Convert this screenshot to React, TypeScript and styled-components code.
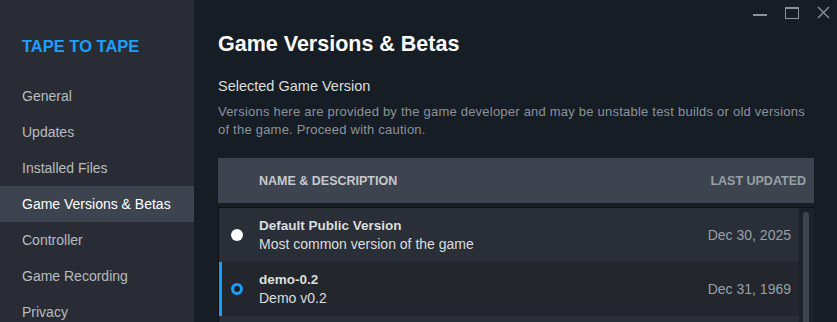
import React from "react";
import styled, { createGlobalStyle } from "styled-components";

const GlobalStyle = createGlobalStyle`
  html, body {
    margin: 0;
    padding: 0;
    background: #171d25;
    font-family: "Liberation Sans", Arial, sans-serif;
  }
  * {
    box-sizing: border-box;
  }
`;

type Version = {
  name: string;
  description: string;
  updated: string;
  selected?: boolean;
};

const versions: Version[] = [
  {
    name: "Default Public Version",
    description: "Most common version of the game",
    updated: "Dec 30, 2025",
  },
  {
    name: "demo-0.2",
    description: "Demo v0.2",
    updated: "Dec 31, 1969",
    selected: true,
  },
  {
    name: "demo-0.1",
    description: "Demo v0.1",
    updated: "Dec 31, 1969",
  },
];

const navItems = [
  "General",
  "Updates",
  "Installed Files",
  "Game Versions & Betas",
  "Controller",
  "Game Recording",
  "Privacy",
];

const App = () => {
  return (
    <>
      <GlobalStyle />
      <Window>
        <Sidebar>
          <GameTitle>TAPE TO TAPE</GameTitle>
          <Nav>
            {navItems.map((item) => (
              <NavItem key={item} $active={item === "Game Versions & Betas"}>
                {item}
              </NavItem>
            ))}
          </Nav>
        </Sidebar>

        <Main>
          <Controls>
            <MinButton />
            <MaxButton />
            <CloseButton>
              <svg width="13" height="13" viewBox="0 0 13 13">
                <path
                  d="M1 1 L12 12 M12 1 L1 12"
                  stroke="#8b929a"
                  strokeWidth="1.4"
                  fill="none"
                />
              </svg>
            </CloseButton>
          </Controls>

          <PageTitle>Game Versions &amp; Betas</PageTitle>
          <SectionTitle>Selected Game Version</SectionTitle>
          <Description>
            Versions here are provided by the game developer and may be unstable
            test builds or old versions of the game. Proceed with caution.
          </Description>

          <Table>
            <HeaderRow>
              <HeaderCell>Name &amp; Description</HeaderCell>
              <HeaderCell $muted>Last Updated</HeaderCell>
            </HeaderRow>
            <List>
              <Rows>
                {versions.map((v, i) => (
                  <Row key={v.name} $selected={v.selected} $even={i % 2 === 1}>
                    <Radio $checked={v.selected} />
                    <Info>
                      <Name>{v.name}</Name>
                      <Sub>{v.description}</Sub>
                    </Info>
                    <Date>{v.updated}</Date>
                  </Row>
                ))}
              </Rows>
              <ScrollTrack>
                <ScrollThumb />
              </ScrollTrack>
            </List>
          </Table>
        </Main>
      </Window>
    </>
  );
};

export default App;

const Window = styled.div`
  display: flex;
  height: 322px;
  overflow: hidden;
`;

const Sidebar = styled.div`
  width: 194px;
  flex-shrink: 0;
  background: #292c35;
  padding-top: 36px;
`;

const GameTitle = styled.div`
  margin-left: 22px;
  height: 20px;
  line-height: 20px;
  font-size: 16.5px;
  font-weight: bold;
  color: #1a9fff;
`;

const Nav = styled.div`
  margin-top: 22px;
  display: flex;
  flex-direction: column;
`;

const NavItem = styled.div<{ $active?: boolean }>`
  height: 36px;
  line-height: 36px;
  padding-left: 22px;
  font-size: 14px;
  white-space: nowrap;
  color: ${(p) => (p.$active ? "#ffffff" : "#b8bcbf")};
  background: ${(p) => (p.$active ? "#3d4450" : "transparent")};
`;

const Main = styled.div`
  position: relative;
  flex: 1;
  padding: 31px 23px 0 24px;
  min-width: 0;
`;

const Controls = styled.div`
  position: absolute;
  top: 6px;
  right: 7px;
  display: flex;
  align-items: center;
  gap: 18px;
`;

const MinButton = styled.div`
  width: 14px;
  height: 2px;
  margin-top: 4px;
  background: #8b929a;
`;

const MaxButton = styled.div`
  width: 14px;
  height: 12px;
  border: 1px solid #8b929a;
  border-top-width: 2px;
`;

const CloseButton = styled.div`
  display: flex;
  width: 13px;
  height: 13px;
`;

const PageTitle = styled.h1`
  margin: 0;
  font-size: 21.5px;
  line-height: 26px;
  font-weight: bold;
  color: #ffffff;
`;

const SectionTitle = styled.div`
  margin-top: 20px;
  font-size: 14.5px;
  line-height: 18px;
  color: #dcdedf;
`;

const Description = styled.p`
  margin: 8px 0 0;
  font-size: 13px;
  letter-spacing: 0.22px;
  line-height: 18px;
  color: #8b929a;
`;

const Table = styled.div`
  margin-top: 19px;
  display: flex;
  flex-direction: column;
  gap: 4px;
`;

const HeaderRow = styled.div`
  height: 45px;
  display: flex;
  align-items: center;
  justify-content: space-between;
  padding: 0 8px 0 41px;
  background: #3d4450;
`;

const HeaderCell = styled.div<{ $muted?: boolean }>`
  font-size: 12.5px;
  font-weight: bold;
  text-transform: uppercase;
  color: ${(p) => (p.$muted ? "#9aa0a7" : "#c6c9cd")};
`;

const List = styled.div`
  display: flex;
  border-top: 1px solid #0f1217;
  border-left: 1px solid #0f1217;
  background: #1d2129;
`;

const Rows = styled.div`
  flex: 1;
  display: flex;
  flex-direction: column;
`;

const Row = styled.div<{ $selected?: boolean; $even?: boolean }>`
  height: 54px;
  display: flex;
  align-items: center;
  padding: 0 8px 0 9px;
  border-left: 3px solid ${(p) => (p.$selected ? "#1a9fff" : "transparent")};
  background: ${(p) => (p.$even ? "#23262d" : "#2a2e37")};
`;

const Radio = styled.div<{ $checked?: boolean }>`
  width: 12px;
  height: 12px;
  border-radius: 50%;
  flex-shrink: 0;
  background: ${(p) => (p.$checked ? "#1c2027" : "#ffffff")};
  border: ${(p) => (p.$checked ? "3px solid #1a9fff" : "none")};
`;

const Info = styled.div`
  flex: 1;
  margin-left: 16px;
  display: flex;
  flex-direction: column;
  gap: 3px;
`;

const Name = styled.div`
  font-size: 13.5px;
  font-weight: bold;
  color: #dcdedf;
`;

const Sub = styled.div`
  font-size: 14px;
  color: #dcdedf;
`;

const Date = styled.div`
  font-size: 14px;
  color: #9aa0a7;
`;

const ScrollTrack = styled.div`
  width: 15px;
  flex-shrink: 0;
  padding: 4px 5px 0 4px;
  background: #1d2129;
`;

const ScrollThumb = styled.div`
  height: 200px;
  border-radius: 3px 3px 0 0;
  background: #3d4450;
`;
